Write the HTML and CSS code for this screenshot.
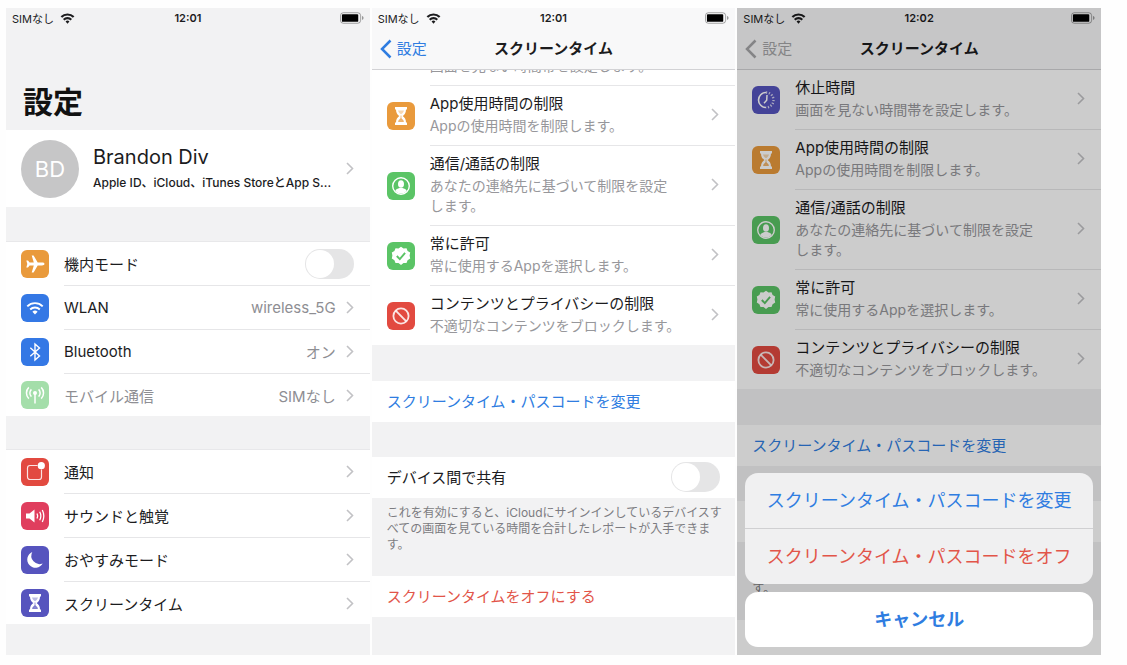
FILE: index.html
```html
<!DOCTYPE html>
<html lang="ja">
<head>
    <meta charset="UTF-8">
    <meta name="viewport" content="width=device-width, initial-scale=1.0">
    <title>設定 - スクリーンタイム</title>
    <link rel="stylesheet" href="styles.css">
</head>
<body>
    <svg class="sprite" aria-hidden="true">
        <symbol id="signal" viewBox="0 0 16 12">
            <path d="M8 11.6 5.9 9.3a3 3 0 0 1 4.2 0z" fill="currentColor"/>
            <path d="M3.900 7.300a5.800 5.800 0 0 1 8.200 0M1.300 4.400a9.500 9.500 0 0 1 13.400 0" fill="none" stroke="currentColor" stroke-width="2.400"/>
        </symbol>
        <symbol id="battery" viewBox="0 0 25 12">
            <rect x="0.5" y="0.5" width="21" height="11" rx="3" fill="none" stroke="currentColor" stroke-opacity="0.35"/>
            <rect x="2" y="2" width="17" height="8" rx="1" fill="currentColor"/>
            <path d="M23 4v4c1-.4 1.5-1.1 1.5-2S24 4.400 23 4z" fill="currentColor" fill-opacity="0.4"/>
        </symbol>
        <symbol id="chevron" viewBox="0 0 8 13">
            <path d="m1 1 5.500 5.500L1 12" fill="none" stroke="currentColor" stroke-width="1.600"/>
        </symbol>
        <symbol id="back" viewBox="0 0 12 20">
            <path d="M10.500 1.500 2 10l8.500 8.500" fill="none" stroke="currentColor" stroke-width="2.500"/>
        </symbol>
        <symbol id="plane" viewBox="0 0 28 28">
            <path d="M23.500 14c0-.9-1.200-1.400-2.500-1.400h-4.300L12.600 5.500h-1.900l2.100 7.100H8.600L7 10.500H5.300L6.300 14l-1 3.500H7l1.600-2.100h4.200l-2.100 7.100h1.900l4.100-7.100H21c1.300 0 2.500-.5 2.500-1.400z" fill="#fff"/>
        </symbol>
        <symbol id="wlan" viewBox="0 0 28 28">
            <path d="m14 20.500-2.600-2.800a3.700 3.700 0 0 1 5.200 0z" fill="#fff"/>
            <path d="M9.200 15.500a6.800 6.800 0 0 1 9.600 0M6.300 12.300a10.900 10.900 0 0 1 15.400 0" fill="none" stroke="#fff" stroke-width="1.900"/>
        </symbol>
        <symbol id="bluetooth" viewBox="0 0 28 28">
            <path d="m9.300 9.800 9.200 8.100L14 22V6l4.500 4.100-9.200 8.100" fill="none" stroke="#fff" stroke-width="1.400"/>
        </symbol>
        <symbol id="cellular" viewBox="0 0 28 28">
            <circle cx="14" cy="12" r="2" fill="#fff"/>
            <path d="M14 12v10.500M10.400 15.600a5 5 0 0 1 0-7.200M17.600 15.600a5 5 0 0 0 0-7.200M7.800 17.600a7.900 7.900 0 0 1 0-11.200M20.200 17.600a7.900 7.900 0 0 0 0-11.200" fill="none" stroke="#fff" stroke-width="1.500"/>
        </symbol>
        <symbol id="notice" viewBox="0 0 28 28">
            <path d="M16.500 7.500H9A2.500 2.500 0 0 0 6.500 10v9A2.500 2.500 0 0 0 9 21.500h9a2.500 2.500 0 0 0 2.500-2.500v-7.500" fill="none" stroke="#fff" stroke-opacity="0.85" stroke-width="1.200"/>
            <circle cx="20.300" cy="7.700" r="3.600" fill="#fff"/>
        </symbol>
        <symbol id="sound" viewBox="0 0 28 28">
            <path d="M5 11.500h3.500L13.500 7.500v13l-5-4H5z" fill="#fff"/>
            <path d="M16 11.500q1.400 2.500 0 5M18.700 9.700q2.300 4.300 0 8.600M21.300 8q3 6 0 12" fill="none" stroke="#fff" stroke-width="1.300"/>
        </symbol>
        <symbol id="moon" viewBox="0 0 28 28">
            <path d="M11.300 6A8.200 8.200 0 1 0 21.700 17.400 8.200 8.200 0 0 1 11.300 6z" fill="#fff"/>
        </symbol>
        <symbol id="hourglass" viewBox="0 0 28 28">
            <path d="M8 5h12v2.400h-1c0 3.600-1.400 5-3.300 6.600 1.900 1.600 3.300 3 3.300 6.600h1V23H8v-2.400h1c0-3.600 1.400-5 3.300-6.600C10.400 12.400 9 11 9 7.400H8z" fill="#fff"/>
            <path d="M11 8.500h6c-.3 1.600-1.400 2.700-3 3.700-1.600-1-2.700-2.100-3-3.700z" fill="currentColor" fill-opacity="0.4"/>
            <path d="M14 13.500v3M11.500 19.500c.5-1.500 1.300-2.300 2.500-3 1.200.7 2 1.500 2.500 3z" fill="currentColor" fill-opacity="0.7" stroke="currentColor" stroke-opacity="0.6" stroke-width="1"/>
        </symbol>
        <symbol id="downtime" viewBox="0 0 28 28">
            <path d="M14 6.500a7.500 7.500 0 0 0 0 15" fill="none" stroke="#fff" stroke-width="1.600"/>
            <path d="M14 6.500a7.500 7.500 0 0 1 0 15" fill="none" stroke="#fff" stroke-opacity="0.75" stroke-width="2.400" stroke-dasharray="1.200 1.700"/>
            <path d="m15 9-.3 5.300-2.700 3" fill="none" stroke="#fff" stroke-width="1.500"/>
        </symbol>
        <symbol id="contact" viewBox="0 0 28 28">
            <circle cx="14" cy="14" r="8.300" fill="none" stroke="#fff" stroke-width="1.400"/>
            <ellipse cx="14" cy="12" rx="3" ry="3.800" fill="#fff"/>
            <path d="M8.300 19c.5-1.900 2.500-2.300 4.200-2.900h3c1.700.6 3.700 1 4.200 2.900a7.600 7.600 0 0 1-11.400 0z" fill="#fff"/>
        </symbol>
        <symbol id="allowed" viewBox="0 0 28 28">
            <path d="m14 4.800 2.500 1.700 3-.3 1.100 2.800 2.600 1.600-.6 3 .6 3-2.600 1.600-1.100 2.800-3-.1L14 23l-2.500-2.100-3 .1-1.100-2.800-2.600-1.600.6-3-.6-3L7.400 9l1.100-2.800 3 .3z" fill="#fff"/>
            <path d="m9.800 14 3 3.100 5.300-6.200" fill="none" stroke="currentColor" stroke-width="1.900"/>
        </symbol>
        <symbol id="blocked" viewBox="0 0 28 28">
            <circle cx="14" cy="14" r="7.600" fill="none" stroke="#fff" stroke-opacity="0.85" stroke-width="1.800"/>
            <path d="m8.700 8.700 10.600 10.600" stroke="#fff" stroke-opacity="0.85" stroke-width="1.900"/>
        </symbol>
    </svg>

    <main class="screens">
        <!-- 設定 -->
        <section class="phone">
            <div class="status">
                <span class="carrier">SIMなし <svg class="signal"><use href="#signal"/></svg></span>
                <time>12:01</time>
                <svg class="battery"><use href="#battery"/></svg>
            </div>
            <h1>設定</h1>
            <a class="profile" href="#">
                <span class="avatar">BD</span>
                <span class="who">
                    <span class="name">Brandon Div</span>
                    <span class="services">Apple ID、iCloud、iTunes StoreとApp S...</span>
                </span>
                <svg class="chevron"><use href="#chevron"/></svg>
            </a>
            <ul class="list gap">
                <li class="row">
                    <svg class="icon orange"><use href="#plane"/></svg>
                    <div class="cell"><label for="airplane">機内モード</label><input class="switch" type="checkbox" id="airplane"></div>
                </li>
                <li><a class="row" href="#">
                    <svg class="icon blue"><use href="#wlan"/></svg>
                    <span class="cell">WLAN<span class="value">wireless_5G</span><svg class="chevron"><use href="#chevron"/></svg></span>
                </a></li>
                <li><a class="row" href="#">
                    <svg class="icon blue"><use href="#bluetooth"/></svg>
                    <span class="cell">Bluetooth<span class="value">オン</span><svg class="chevron"><use href="#chevron"/></svg></span>
                </a></li>
                <li><a class="row off" href="#">
                    <svg class="icon green"><use href="#cellular"/></svg>
                    <span class="cell">モバイル通信<span class="value">SIMなし</span><svg class="chevron"><use href="#chevron"/></svg></span>
                </a></li>
            </ul>
            <ul class="list gap">
                <li><a class="row" href="#">
                    <svg class="icon red"><use href="#notice"/></svg>
                    <span class="cell">通知<svg class="chevron"><use href="#chevron"/></svg></span>
                </a></li>
                <li><a class="row" href="#">
                    <svg class="icon pink"><use href="#sound"/></svg>
                    <span class="cell">サウンドと触覚<svg class="chevron"><use href="#chevron"/></svg></span>
                </a></li>
                <li><a class="row" href="#">
                    <svg class="icon purple"><use href="#moon"/></svg>
                    <span class="cell">おやすみモード<svg class="chevron"><use href="#chevron"/></svg></span>
                </a></li>
                <li><a class="row" href="#">
                    <svg class="icon purple"><use href="#hourglass"/></svg>
                    <span class="cell">スクリーンタイム<svg class="chevron"><use href="#chevron"/></svg></span>
                </a></li>
            </ul>
        </section>

        <!-- スクリーンタイム -->
        <section class="phone">
            <header class="bar">
                <div class="status">
                    <span class="carrier">SIMなし <svg class="signal"><use href="#signal"/></svg></span>
                    <time>12:01</time>
                    <svg class="battery"><use href="#battery"/></svg>
                </div>
                <nav class="nav">
                    <a class="back" href="#"><svg><use href="#back"/></svg>設定</a>
                    <h2>スクリーンタイム</h2>
                </nav>
            </header>
            <div class="content">
                <div class="scrolled">
                    <ul class="list details">
                        <li><a class="row" href="#">
                            <svg class="icon purple"><use href="#downtime"/></svg>
                            <span class="cell"><span class="text"><span>休止時間</span><small>画面を見ない時間帯を設定します。</small></span><svg class="chevron"><use href="#chevron"/></svg></span>
                        </a></li>
                        <li><a class="row" href="#">
                            <svg class="icon orange"><use href="#hourglass"/></svg>
                            <span class="cell"><span class="text"><span>App使用時間の制限</span><small>Appの使用時間を制限します。</small></span><svg class="chevron"><use href="#chevron"/></svg></span>
                        </a></li>
                        <li><a class="row" href="#">
                            <svg class="icon green"><use href="#contact"/></svg>
                            <span class="cell"><span class="text"><span>通信/通話の制限</span><small>あなたの連絡先に基づいて制限を設定<br>します。</small></span><svg class="chevron"><use href="#chevron"/></svg></span>
                        </a></li>
                        <li><a class="row" href="#">
                            <svg class="icon green"><use href="#allowed"/></svg>
                            <span class="cell"><span class="text"><span>常に許可</span><small>常に使用するAppを選択します。</small></span><svg class="chevron"><use href="#chevron"/></svg></span>
                        </a></li>
                        <li><a class="row" href="#">
                            <svg class="icon red"><use href="#blocked"/></svg>
                            <span class="cell"><span class="text"><span>コンテンツとプライバシーの制限</span><small>不適切なコンテンツをブロックします。</small></span><svg class="chevron"><use href="#chevron"/></svg></span>
                        </a></li>
                    </ul>
                    <button class="single link">スクリーンタイム・パスコードを変更</button>
                    <div class="single"><label for="share">デバイス間で共有</label><input class="switch" type="checkbox" id="share"></div>
                    <p class="note">これを有効にすると、iCloudにサインインしているデバイスす<br>べての画面を見ている時間を合計したレポートが入手できま<br>す。</p>
                    <button class="single danger">スクリーンタイムをオフにする</button>
                </div>
            </div>
        </section>

        <!-- アクションシート表示中 -->
        <section class="phone">
            <header class="bar">
                <div class="status">
                    <span class="carrier">SIMなし <svg class="signal"><use href="#signal"/></svg></span>
                    <time>12:02</time>
                    <svg class="battery"><use href="#battery"/></svg>
                </div>
                <nav class="nav">
                    <a class="back inactive" href="#"><svg><use href="#back"/></svg>設定</a>
                    <h2>スクリーンタイム</h2>
                </nav>
            </header>
            <div class="content">
                <ul class="list details">
                    <li><a class="row" href="#">
                        <svg class="icon purple"><use href="#downtime"/></svg>
                        <span class="cell"><span class="text"><span>休止時間</span><small>画面を見ない時間帯を設定します。</small></span><svg class="chevron"><use href="#chevron"/></svg></span>
                    </a></li>
                    <li><a class="row" href="#">
                        <svg class="icon orange"><use href="#hourglass"/></svg>
                        <span class="cell"><span class="text"><span>App使用時間の制限</span><small>Appの使用時間を制限します。</small></span><svg class="chevron"><use href="#chevron"/></svg></span>
                    </a></li>
                    <li><a class="row" href="#">
                        <svg class="icon green"><use href="#contact"/></svg>
                        <span class="cell"><span class="text"><span>通信/通話の制限</span><small>あなたの連絡先に基づいて制限を設定<br>します。</small></span><svg class="chevron"><use href="#chevron"/></svg></span>
                    </a></li>
                    <li><a class="row" href="#">
                        <svg class="icon green"><use href="#allowed"/></svg>
                        <span class="cell"><span class="text"><span>常に許可</span><small>常に使用するAppを選択します。</small></span><svg class="chevron"><use href="#chevron"/></svg></span>
                    </a></li>
                    <li><a class="row" href="#">
                        <svg class="icon red"><use href="#blocked"/></svg>
                        <span class="cell"><span class="text"><span>コンテンツとプライバシーの制限</span><small>不適切なコンテンツをブロックします。</small></span><svg class="chevron"><use href="#chevron"/></svg></span>
                    </a></li>
                </ul>
                <button class="single link">スクリーンタイム・パスコードを変更</button>
                <div class="single"></div>
                <p class="note"><br><br>す。</p>
                <div class="single"></div>
            </div>
            <div class="overlay">
                <div class="sheet">
                    <button class="link">スクリーンタイム・パスコードを変更</button>
                    <button class="danger">スクリーンタイム・パスコードをオフ</button>
                </div>
                <div class="sheet cancel">
                    <button class="link">キャンセル</button>
                </div>
            </div>
        </section>
    </main>
</body>
</html>
```
FILE: styles.css
```css
* {
    box-sizing: border-box;
}
body {
    margin: 0;
    background-color: #fefefe;
    font-family: Inter, "Noto Sans CJK JP", sans-serif;
    font-size: 15px;
    color: #1c1c1e;
}
h1, h2, p, ul {
    margin: 0;
    padding: 0;
}
ul {
    list-style: none;
}
a {
    color: inherit;
    text-decoration: none;
}
button {
    border: none;
    font-family: inherit;
    cursor: pointer;
}
.sprite {
    display: none;
}
.screens {
    display: flex;
    gap: 2px;
    height: 100vh;
    padding: 8px 26px 10px 6px;
}
.phone {
    position: relative;
    flex: 1;
    min-width: 0;
    display: flex;
    flex-direction: column;
    overflow: hidden;
    background-color: #f2f2f3;
}

/* status bar + navigation */
.status {
    display: grid;
    grid-template-columns: 1fr auto 1fr;
    align-items: center;
    height: 20px;
    padding: 0 6px;
    font-size: 11px;
}
.status time {
    font-weight: 600;
}
.carrier {
    display: flex;
    align-items: center;
    gap: 6px;
}
.signal {
    width: 15px;
    height: 11px;
}
.battery {
    width: 24px;
    height: 12px;
    justify-self: end;
    color: #000;
}
.bar {
    background-color: #f8f8f9;
    border-bottom: 1px solid #d2d2d5;
}
.nav {
    display: grid;
    grid-template-columns: 1fr auto 1fr;
    align-items: center;
    height: 41px;
    padding: 0 8px;
}
.nav h2 {
    font-size: 15px;
    line-height: 20px;
    font-weight: 700;
}
.back {
    display: flex;
    align-items: center;
    gap: 5px;
    line-height: 20px;
    color: #2f7de1;
}
.back svg {
    width: 12px;
    height: 20px;
}
.back.inactive {
    color: #a6a6a8;
}
h1 {
    padding: 56px 17px 10px;
    font-size: 30px;
    line-height: 36px;
    font-weight: 700;
    color: #111;
}

/* account */
.profile {
    display: flex;
    align-items: center;
    gap: 14px;
    height: 77px;
    padding: 0 16px 0 15px;
    background-color: #fff;
}
.avatar {
    display: flex;
    align-items: center;
    justify-content: center;
    width: 58px;
    height: 58px;
    border-radius: 50%;
    background-color: #c6c6c7;
    color: #fff;
    font-size: 22px;
}
.who {
    flex: 1;
    display: flex;
    flex-direction: column;
    gap: 4px;
}
.name {
    font-size: 20px;
    line-height: 24px;
}
.services {
    font-size: 12px;
    line-height: 20px;
    font-weight: 500;
    white-space: nowrap;
}
.chevron {
    flex: none;
    width: 8px;
    height: 13px;
    margin-left: auto;
    color: #c2c2c5;
}

/* lists */
.list {
    background-color: #fff;
}
.gap {
    margin-top: 34px;
    border-top: 1px solid #e8e8ea;
}
.gap + .gap {
    margin-top: 33px;
}
.row {
    display: flex;
    align-items: center;
    gap: 15px;
    padding-left: 15px;
}
.icon {
    flex: none;
    width: 28px;
    height: 28px;
    border-radius: 6px;
}
.cell {
    flex: 1;
    display: flex;
    align-items: center;
    min-height: 44px;
    padding-right: 16px;
    border-bottom: 1px solid #e6e6e8;
}
li:last-child .cell {
    min-height: 42px;
    border-bottom: none;
}
.value {
    margin-left: auto;
    color: #8e8e93;
}
.value + .chevron {
    margin-left: 10px;
}
.off .cell {
    color: #8e8e93;
}
.off .icon {
    opacity: 0.55;
}
.orange {
    background-color: #e99a3c;
    color: #e99a3c;
}
.blue {
    background-color: #3478e5;
}
.green {
    background-color: #5bc466;
    color: #5bc466;
}
.red {
    background-color: #e24a40;
}
.pink {
    background-color: #e03e5e;
}
.purple {
    background-color: #5654be;
    color: #5654be;
}
.switch {
    appearance: none;
    display: flex;
    width: 49px;
    height: 30px;
    margin: 0 0 0 auto;
    padding: 1px;
    border-radius: 15px;
    background-color: #e5e5e6;
}
.switch::before {
    content: "";
    width: 28px;
    height: 28px;
    border-radius: 50%;
    background-color: #fff;
}
.switch:checked {
    justify-content: flex-end;
    background-color: #5bc466;
}
.content {
    flex: 1;
    min-height: 0;
    overflow: hidden;
}
.scrolled {
    margin-top: -44px;
}
.details .cell {
    padding-top: 7px;
    padding-bottom: 9px;
}
.text {
    display: flex;
    flex-direction: column;
    gap: 1px;
    line-height: 22px;
    white-space: nowrap;
}
.text small {
    font-size: 14px;
    line-height: 20px;
    color: #97979b;
}
.single {
    display: flex;
    align-items: center;
    width: 100%;
    height: 41px;
    margin-top: 36px;
    padding: 0 15px 2px;
    background-color: #fff;
    font-size: 15px;
}
.single + .single {
    margin-top: 35px;
}
.link {
    color: #2f7de1;
}
.danger {
    color: #e25549;
}
.note {
    padding: 7px 15px 23px;
    font-size: 12px;
    line-height: 16px;
    white-space: nowrap;
    color: #7c7c81;
}
.note + .single {
    margin-top: 0;
}

/* action sheet */
.overlay {
    position: absolute;
    inset: 0;
    display: flex;
    flex-direction: column;
    justify-content: flex-end;
    gap: 8px;
    padding: 8px;
    background-color: rgba(0, 0, 0, 0.2);
}
.sheet {
    overflow: hidden;
    border-radius: 13px;
    background-color: #f0f0f1;
}
.sheet button {
    display: block;
    width: 100%;
    height: 55px;
    padding: 0 0 3px;
    background-color: transparent;
    font-size: 18px;
}
.sheet button + button {
    height: 56px;
    border-top: 1px solid #d0d0d2;
}
.sheet.cancel {
    background-color: #fff;
}
.cancel button {
    font-weight: 700;
}
```
